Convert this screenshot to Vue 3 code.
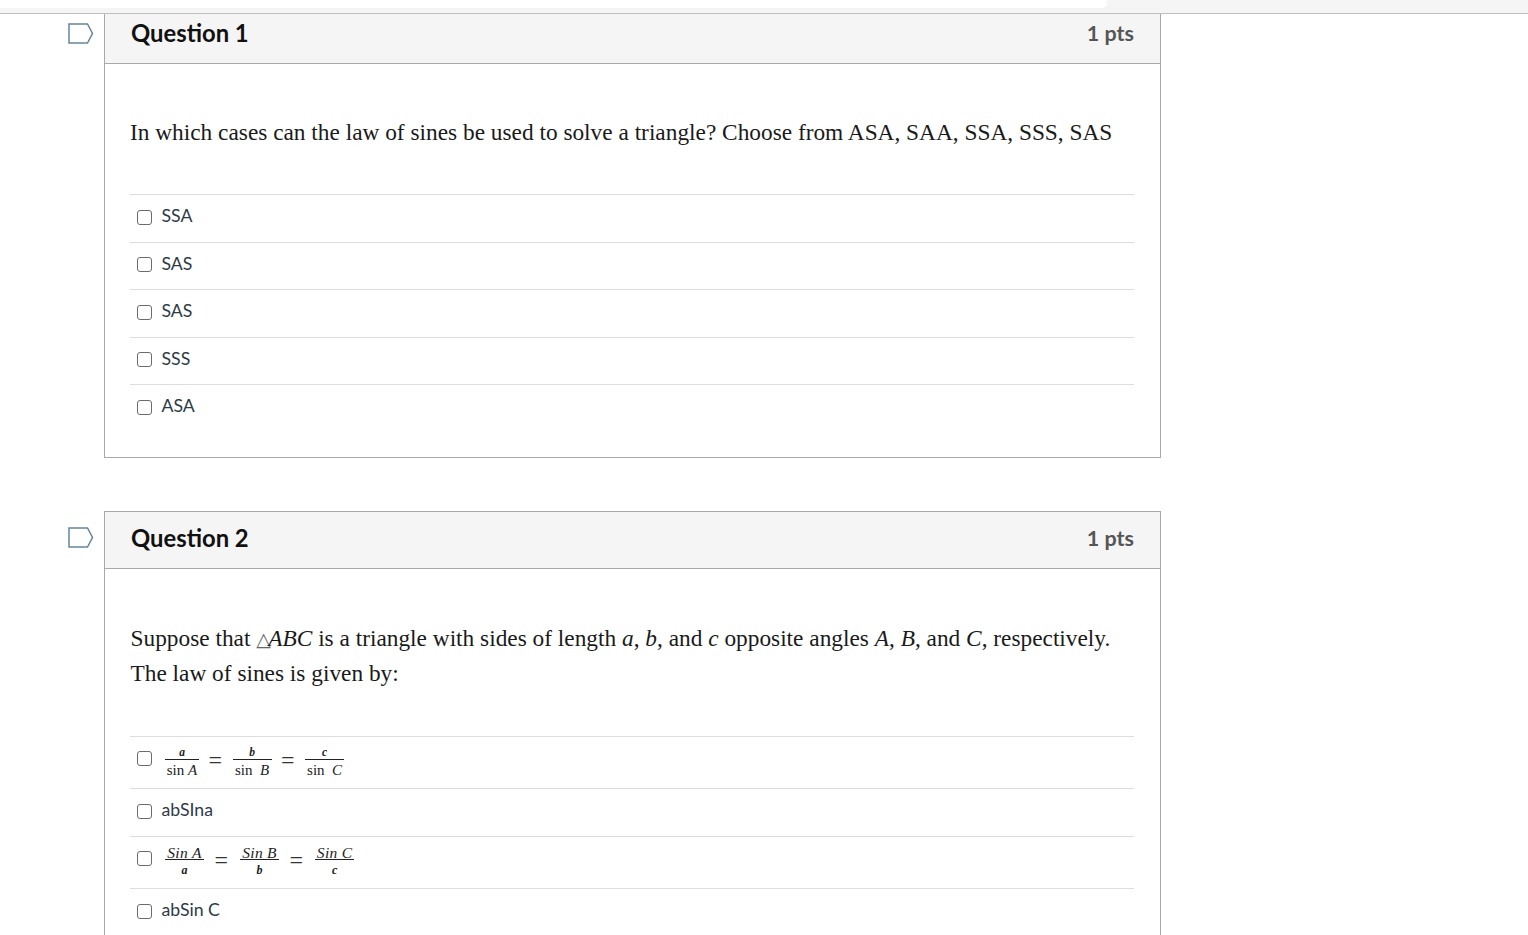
<template>
  <div class="page">
    <div class="top-strip"><div class="top-tab"></div></div>

    <div v-for="q in questions" :key="q.title" :class="['question', q.cls]">
      <div class="flag-col">
        <svg class="flag" width="26" height="21" viewBox="0 0 26 21">
          <path d="M1 1H19.500L24.500 10.500L19.500 20H1Z" fill="#fff" stroke="#668599" stroke-width="1.500" />
        </svg>
      </div>
      <div class="card">
        <div class="card-head">
          <h3 class="card-title">{{ q.title }}</h3>
          <span class="pts">1 pts</span>
        </div>
        <div class="card-body">
          <p v-if="q.cls === 'q1'" class="q-text">In which cases can the law of sines be used to solve a triangle? Choose from ASA, SAA, SSA, SSS, SAS</p>
          <p v-else class="q-text">
            Suppose that <span class="delta">△</span><i>ABC</i> is a triangle with sides of length <i>a</i>, <i>b</i>, and <i>c</i> opposite angles <i>A</i>, <i>B</i>, and <i>C</i>, respectively.<br>The law of sines is given by:
          </p>
          <div class="answers">
            <label v-for="(a, i) in q.answers" :key="i" :class="['answer', a.kind]">
              <span class="check"></span>
              <span v-if="a.label" class="answer-label">{{ a.label }}</span>
              <span v-else class="formula">
                <template v-for="(f, j) in a.fractions" :key="j">
                  <span v-if="j" class="equals">=</span>
                  <span class="frac">
                    <span class="num">{{ f.num }}</span>
                    <span class="den">{{ f.fn }}<i>{{ f.den }}</i></span>
                  </span>
                </template>
              </span>
            </label>
          </div>
        </div>
      </div>
    </div>
  </div>
</template>

<script setup>
const questions = [
  {
    title: 'Question 1',
    cls: 'q1',
    answers: [
      { label: 'SSA' }, { label: 'SAS' }, { label: 'SAS' }, { label: 'SSS' }, { label: 'ASA' },
    ],
  },
  {
    title: 'Question 2',
    cls: 'q2',
    answers: [
      {
        kind: 'tall sin-under',
        fractions: [
          { num: 'a', fn: 'sin ', den: 'A' },
          { num: 'b', fn: 'sin\u00a0 ', den: 'B' },
          { num: 'c', fn: 'sin\u00a0 ', den: 'C' },
        ],
      },
      { label: 'abSIna' },
      {
        kind: 'tall sin-over',
        fractions: [
          { num: 'Sin A', fn: '', den: 'a' },
          { num: 'Sin B', fn: '', den: 'b' },
          { num: 'Sin C', fn: '', den: 'c' },
        ],
      },
      { label: 'abSin C' },
    ],
  },
]
</script>

<style>
html, body { overflow: hidden; background: #fff; }
</style>

<style scoped>
.page { width: 1528px; height: 935px; overflow: hidden; font-family: Lato, sans-serif; color: #111; }
.top-strip { height: 13px; background: #f5f5f5; border-bottom: 1px solid #c0c0c0; }
.top-tab { width: 1107px; height: 8px; background: #fff; border-bottom-right-radius: 5px; }
.question { display: flex; padding-left: 68px; }
.q2 { margin-top: 53px; }
.flag-col { width: 36px; flex: none; }
.flag { display: block; margin-top: 9px; }
.q2 .flag { margin-top: 16px; }
.card { width: 1057px; box-sizing: border-box; border: 1px solid #a9a9a9; border-top: 0; }
.q2 .card { border-top: 1px solid #a9a9a9; }
.card-head { height: 50px; box-sizing: border-box; padding: 0 26px 11px 26px; display: flex; align-items: center; justify-content: space-between; background: #f5f5f5; border-bottom: 1px solid #a9a9a9; }
.q2 .card-head { height: 57px; padding-bottom: 4px; }
.card-title { margin: 0; font-size: 23.800px; font-weight: 700; color: #111; }
.pts { font-size: 21.500px; font-weight: 700; color: #555; }
.card-body { padding: 0 26px 25px 25px; }
.q-text { margin: 0; padding: 51px 0 44px; font-family: "Liberation Serif", serif; font-size: 23.330px; line-height: 35px; color: #1a1a1a; }
.q2 .q-text { padding: 52px 0 45px 0.500px; }
.delta { font-size: 19px; line-height: 0; color: #666; font-family: "DejaVu Sans", sans-serif; letter-spacing: -2.600px; }
.answers { display: flex; flex-direction: column; }
.answer { height: 47.500px; box-sizing: border-box; border-top: 1px solid #ddd; display: flex; align-items: center; padding: 0 0 4px 7px; gap: 9.500px; font-size: 17.700px; color: #2d3b45; }
.q2 .answer { height: 48px; }
.q2 .answer.tall { height: 52px; }
.answer-label { margin-bottom: 1.500px; }
.check { width: 15px; height: 15px; flex: none; box-sizing: border-box; border: 1.500px solid #6b6b6b; border-radius: 3px; background: #fff; margin-top: 2px; }
.tall .check { margin-top: -4px; }
.formula { display: flex; align-items: center; font-family: "Liberation Serif", serif; color: #222; padding-left: 3.500px; }
.equals { font-size: 24px; line-height: 1; margin: 0 10.500px 0 9.500px; color: #333; }
.sin-over .equals { margin: 0 12px 0 10.500px; }
.frac { display: inline-flex; flex-direction: column; margin-top: 6px; text-align: center; white-space: nowrap; }
.num { border-bottom: 1px solid #222; padding: 0 1px; line-height: 13px; }
.den { padding: 0 1px; line-height: 20px; }
.sin-under .frac { min-width: 39px; }
.sin-under .frac:first-child { min-width: 34px; }
.sin-under .num { font-size: 11.500px; font-weight: 700; font-style: italic; }
.sin-under .den { font-size: 15px; }
.sin-over .frac { min-width: 39px; }
.sin-over .num { font-size: 15.500px; font-style: italic; letter-spacing: 0.300px; }
.sin-over .den { font-size: 12px; font-weight: 700; }
</style>
